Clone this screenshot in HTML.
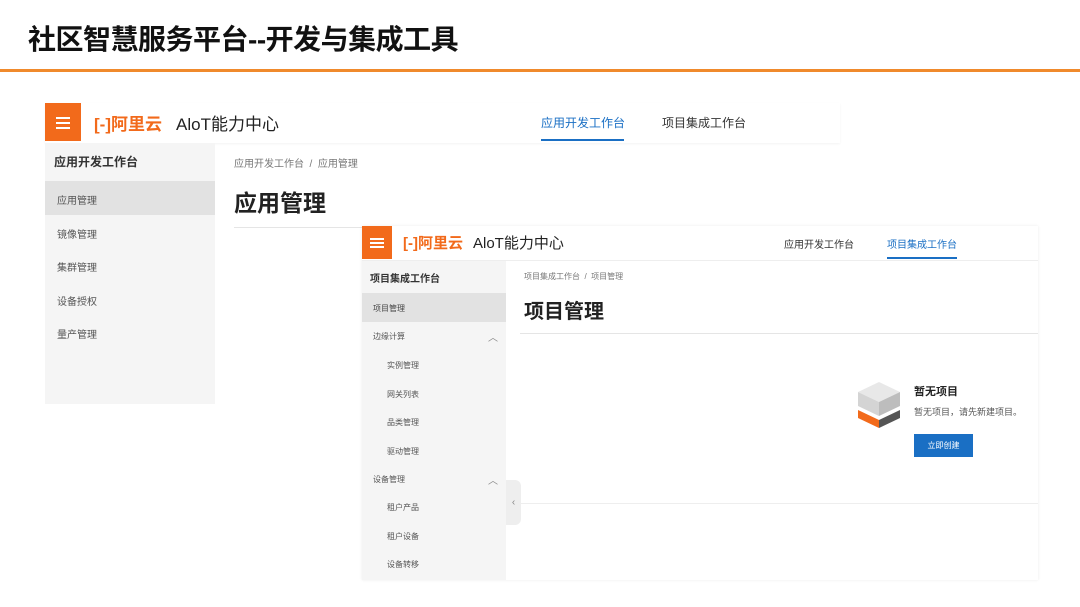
<!DOCTYPE html>
<html><head><meta charset="utf-8"><style>
*{margin:0;padding:0;box-sizing:border-box}
body{width:1080px;height:607px;background:#fff;position:relative;overflow:hidden;font-family:"Liberation Sans","Noto Sans CJK SC",sans-serif;color:#333}
.a{position:absolute;white-space:nowrap}
.menu{background:#f26a1b}
.menu i{position:absolute;left:50%;width:14px;height:2px;background:#fff;margin-left:-7px}
.logo{color:#f26a1b;font-weight:bold}
.sb{background:#f5f5f5}
.it{font-size:10px;color:#555}
</style></head><body>
<div class="a" style="left:28px;top:18px;font-size:28px;font-weight:bold;color:#111;letter-spacing:-0.5px">社区智慧服务平台--开发与集成工具</div>
<div class="a" style="left:0;top:69px;width:1080px;height:3px;background:#f08a2c"></div>

<!-- back window -->
<div class="a" style="left:45px;top:103px;width:795px;height:40px;background:#fff;box-shadow:0 1px 2px rgba(0,0,0,.05)"></div>
<div class="a menu" style="left:45px;top:103px;width:36px;height:38px"><i style="top:14px"></i><i style="top:19px"></i><i style="top:24px"></i></div>
<div class="a logo" style="left:94px;top:110px;font-size:17px">[-]阿里云</div>
<div class="a" style="left:176px;top:110px;font-size:17px;color:#222">AloT能力中心</div>
<div class="a" style="left:541px;top:114px;font-size:12px;color:#1a6fc4">应用开发工作台</div>
<div class="a" style="left:541px;top:139px;width:83px;height:2px;background:#1a6fc4"></div>
<div class="a" style="left:662px;top:114px;font-size:12px;color:#333">项目集成工作台</div>
<div class="a sb" style="left:45px;top:143px;width:170px;height:261px"></div>
<div class="a" style="left:54px;top:153px;font-size:12px;font-weight:bold">应用开发工作台</div>
<div class="a" style="left:45px;top:181px;width:170px;height:34px;background:#e2e2e2"></div>
<div class="a it" style="left:57px;top:192px">应用管理</div>
<div class="a it" style="left:57px;top:226px">镜像管理</div>
<div class="a it" style="left:57px;top:259px">集群管理</div>
<div class="a it" style="left:57px;top:293px">设备授权</div>
<div class="a it" style="left:57px;top:326px">量产管理</div>
<div class="a" style="left:234px;top:155px;font-size:10px;color:#777">应用开发工作台 &nbsp;/ &nbsp;应用管理</div>
<div class="a" style="left:234px;top:184px;font-size:23px;font-weight:bold;color:#222">应用管理</div>
<div class="a" style="left:234px;top:227px;width:128px;height:1px;background:#e5e5e5"></div>

<!-- front window -->
<div class="a" style="left:362px;top:226px;width:676px;height:354px;background:#fff;box-shadow:0 0 3px rgba(0,0,0,.08)"></div>
<div class="a" style="left:362px;top:260px;width:676px;height:1px;background:#eee"></div>
<div class="a menu" style="left:362px;top:226px;width:30px;height:33px"><i style="top:12px"></i><i style="top:16px"></i><i style="top:20px"></i></div>
<div class="a logo" style="left:403px;top:232px;font-size:15px">[-]阿里云</div>
<div class="a" style="left:473px;top:232px;font-size:15px;color:#222">AloT能力中心</div>
<div class="a" style="left:784px;top:236px;font-size:10px;color:#333">应用开发工作台</div>
<div class="a" style="left:887px;top:236px;font-size:10px;color:#1a6fc4">项目集成工作台</div>
<div class="a" style="left:887px;top:257px;width:70px;height:2px;background:#1a6fc4"></div>
<div class="a sb" style="left:362px;top:261px;width:144px;height:319px"></div>
<div class="a" style="left:370px;top:270px;font-size:10px;font-weight:bold">项目集成工作台</div>
<div class="a" style="left:362px;top:293px;width:144px;height:29px;background:#e2e2e2"></div>
<div class="a" style="left:373px;top:303px;font-size:8px;color:#444">项目管理</div>
<div class="a" style="left:373px;top:331px;font-size:8px;color:#555">边缘计算</div>
<div class="a" style="left:488px;top:329px;font-size:10px;color:#888">︿</div>
<div class="a" style="left:387px;top:360px;font-size:8px;color:#555">实例管理</div>
<div class="a" style="left:387px;top:389px;font-size:8px;color:#555">网关列表</div>
<div class="a" style="left:387px;top:417px;font-size:8px;color:#555">品类管理</div>
<div class="a" style="left:387px;top:446px;font-size:8px;color:#555">驱动管理</div>
<div class="a" style="left:373px;top:474px;font-size:8px;color:#555">设备管理</div>
<div class="a" style="left:488px;top:472px;font-size:10px;color:#888">︿</div>
<div class="a" style="left:387px;top:502px;font-size:8px;color:#555">租户产品</div>
<div class="a" style="left:387px;top:531px;font-size:8px;color:#555">租户设备</div>
<div class="a" style="left:387px;top:559px;font-size:8px;color:#555">设备转移</div>
<div class="a" style="left:506px;top:480px;width:15px;height:45px;background:#eee;border-radius:0 6px 6px 0;font-size:10px;color:#888;text-align:center;line-height:45px">‹</div>
<div class="a" style="left:524px;top:271px;font-size:8px;color:#777">项目集成工作台 &nbsp;/ &nbsp;项目管理</div>
<div class="a" style="left:524px;top:295px;font-size:20px;font-weight:bold;color:#222">项目管理</div>
<div class="a" style="left:520px;top:333px;width:518px;height:1px;background:#e5e5e5"></div>
<div class="a" style="left:520px;top:503px;width:518px;height:1px;background:#eee"></div>
<svg class="a" style="left:856px;top:380px" width="46" height="50" viewBox="0 0 46 50">
<polygon points="23,2 44,12 23,22 2,12" fill="#e8e8e8"/>
<polygon points="2,12 23,22 23,36 2,26" fill="#d4d4d4"/>
<polygon points="23,22 44,12 44,26 23,36" fill="#bdbdbd"/>
<polygon points="2,30 23,40 23,48 2,38" fill="#f26a1b"/>
<polygon points="23,40 44,30 44,38 23,48" fill="#555"/>
</svg>
<div class="a" style="left:914px;top:383px;font-size:11px;font-weight:bold;color:#222">暂无项目</div>
<div class="a" style="left:914px;top:405px;font-size:9px;color:#555">暂无项目，请先新建项目。</div>
<div class="a" style="left:914px;top:434px;width:59px;height:23px;background:#1a6fc4;color:#fff;font-size:8px;text-align:center;line-height:23px">立即创建</div>
</body></html>
